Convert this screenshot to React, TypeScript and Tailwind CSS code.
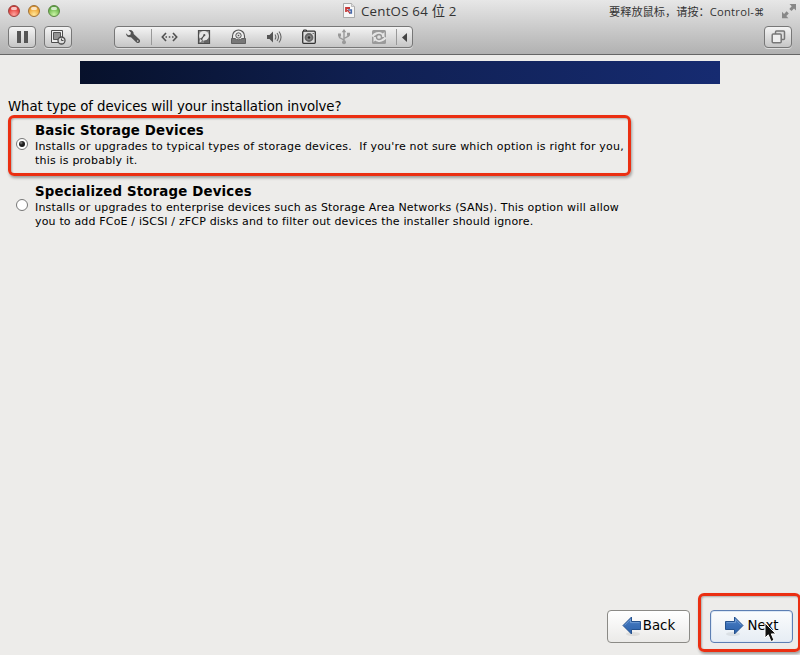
import React from "react";

const toolButton =
  "flex h-[22px] w-7 items-center justify-center rounded-[4px] border border-[#777] bg-linear-to-b from-[#f4f4f4] to-[#c6c6c6] shadow-[0_1px_0_#ddd]";

function TrafficLight({ className }: { className: string }) {
  return (
    <span className={`flex size-3 justify-center rounded-full border ${className}`}>
      <span className="mt-px h-[3px] w-1.5 rounded-full bg-white/70" />
    </span>
  );
}

function DocumentIcon() {
  return (
    <svg width="12" height="15" viewBox="0 0 12 15">
      <path d="M.5.5h8l3 3v11H.5z" fill="#f7f7f7" stroke="#999" strokeWidth=".8" />
      <path d="M8.5.5v3h3" fill="#ddd" stroke="#aaa" strokeWidth=".7" />
      <path d="M3 9V5h4" fill="none" stroke="#c63a38" strokeWidth="1.8" />
      <path d="M5 7h3.3v3H6" fill="none" stroke="#466aab" strokeWidth="1.6" />
      <path d="M4 7l3 3" stroke="#c63a38" strokeWidth="1.2" />
    </svg>
  );
}

function FullscreenIcon() {
  return (
    <svg width="15" height="15" viewBox="0 0 15 15" fill="#888">
      <path d="M7.5 0H14v6.5l-2-2-2.5 2.6-2.2-2.2L9.7 2.2zM0 7.8l2.1 2.1 2.5-2.6 2.2 2.2-2.5 2.6 2.1 2.1H0z" />
    </svg>
  );
}

function SnapshotIcon() {
  return (
    <svg width="16" height="16" viewBox="0 0 16 16">
      <path d="M1.5 13.5V1.5h11v12z" fill="#eee" stroke="#4d4d4d" />
      <path d="M3.5 3.5h7v7h-7z" fill="#929292" stroke="#555" />
      <circle cx="11.5" cy="11.5" r="3.5" fill="#ddd" stroke="#4d4d4d" strokeWidth="1.3" />
      <path d="M11.5 9.5v2h2" fill="none" stroke="#4d4d4d" />
    </svg>
  );
}

function WrenchIcon() {
  return (
    <svg width="16" height="16" viewBox="0 0 16 16">
      <path d="M3.6 1.2C6.4.4 9 2.4 8.7 5.1l5.6 5.2c1.1 1.1 1 2.5.2 3.2-.8.8-2.2.8-3.1-.1L6 8.2C3.4 8.9 1 7 .9 4.3l2.3 1.9 2.2-.5.5-2.2z" fill="#555" />
      <circle cx="12.7" cy="12" r=".8" fill="#ddd" />
    </svg>
  );
}

function NetworkIcon() {
  return (
    <svg width="17" height="12" viewBox="0 0 17 12">
      <path d="M5 2L1.3 6 5 10M12 2l3.7 4L12 10" fill="none" stroke="#505050" strokeWidth="1.6" />
      <path d="M4.5 5.2H6v1.6H4.5zM7.8 5.2h1.5v1.6H7.8zM11 5.2h1.5v1.6H11z" fill="#505050" />
    </svg>
  );
}

function HardDiskIcon() {
  return (
    <svg width="14" height="16" viewBox="0 0 14 16">
      <path d="M1.5 1.5h11v13h-11z" fill="#888" stroke="#4c4c4c" strokeWidth="1.2" />
      <circle cx="7" cy="6.8" r="4.9" fill="#e5e5e5" />
      <path d="M2.5 10l2.3-1 .5 3-1.6 1.8H2z" fill="#ddd" stroke="#555" strokeWidth=".7" />
      <path d="M4 10.8l3-4.3" stroke="#444" strokeWidth="1.1" />
      <circle cx="7.3" cy="6.2" r="1.1" fill="#555" />
      <path d="M7 11.7c3-.3 4.4-2 4.8-3.5V14H7z" fill="#666" />
    </svg>
  );
}

function OpticalIcon() {
  return (
    <svg width="15" height="16" viewBox="0 0 15 16">
      <path d="M1.5 10V7A6 6 0 0 1 13.5 7v3" fill="#eee" stroke="#555" strokeWidth="1.1" />
      <circle cx="7.5" cy="6.5" r="2.7" fill="#ddd" stroke="#555" />
      <circle cx="7.5" cy="6.5" r=".8" fill="#555" />
      <path d="M.5 9.5H4c1.8 1.7 5.2 1.7 7 0h3.5v5H.5z" fill="#777" stroke="#606060" />
    </svg>
  );
}

function SpeakerIcon() {
  return (
    <svg width="16" height="14" viewBox="0 0 16 14">
      <path d="M1 5h2.5L7 1.5v11L3.5 9H1z" fill="#555" />
      <path d="M9 4.5q1.7 2.5 0 5M11 3q3 4 0 8M13 1.5q4.1 5.5 0 11" fill="none" stroke="#666" strokeWidth="1.1" />
    </svg>
  );
}

function CameraIcon() {
  return (
    <svg width="14" height="16" viewBox="0 0 14 16">
      <path d="M1.5 2V1h3v1" fill="none" stroke="#333" />
      <rect x=".7" y="2.2" width="12.6" height="12.1" rx="1" fill="#ddd" stroke="#333" strokeWidth="1.3" />
      <circle cx="7" cy="8.5" r="3.5" fill="#888" stroke="#666" strokeWidth="1.8" />
      <circle cx="7" cy="8.5" r="1.3" fill="#333" />
      <path d="M10.7 4h1v1h-1z" fill="#444" />
    </svg>
  );
}

function UsbIcon() {
  return (
    <svg width="14" height="16" viewBox="0 0 14 16">
      <path d="M7 2v11M7 11L2.5 8.5V6M7 9.5L11.5 7V5" fill="none" stroke="#999" strokeWidth="1.4" />
      <path d="M7 0l2.3 3.2H4.7zM1 4.5h3v3H1zM10 3.8h3v3h-3z" fill="#999" />
      <circle cx="7" cy="13.3" r="2" fill="#999" />
    </svg>
  );
}

function SyncIcon() {
  return (
    <svg width="16" height="16" viewBox="0 0 16 16">
      <rect x="1" y="1" width="14" height="14" rx="1.5" fill="#9a9a9a" />
      <path d="M.5 7C3 3.2 8 1.8 11.8 4.6l1.7-1.6v5H8.7l1.5-1.6C7.6 4.6 4 5.2 2.4 8.2z" fill="#e5e5e5" />
      <path d="M15.5 9c-2.5 3.8-7.5 5.2-11.3 2.4L2.5 13V8h4.8L5.8 9.6c2.6 1.8 6.2 1.2 7.8-1.8z" fill="#e5e5e5" />
      <circle cx="8" cy="8" r="2.5" fill="#e2e2e2" stroke="#959595" strokeWidth="1.3" />
    </svg>
  );
}

function WindowsIcon() {
  return (
    <svg width="15" height="14" viewBox="0 0 15 14">
      <rect x="4.5" y="1" width="9" height="8.5" rx="1" fill="#ddd" stroke="#777" strokeWidth="1.5" />
      <rect x="1.2" y="4" width="9" height="8.8" rx="1" fill="#eee" stroke="#777" strokeWidth="1.5" />
    </svg>
  );
}

function ArrowIcon({ direction }: { direction: "left" | "right" }) {
  return (
    <svg width="20" height="22" viewBox="0 0 20 22" className={direction === "left" ? "" : "-scale-x-100"}>
      <defs>
        <linearGradient id={`arrow-${direction}`} x1="0" y1="0" x2="0" y2="1">
          <stop stopColor="#4b7fc4" />
          <stop offset="1" stopColor="#2a60aa" />
        </linearGradient>
      </defs>
      <ellipse cx="11" cy="19" rx="7" ry="2" fill="#000" opacity=".07" />
      <path d="M1 10.5L9.5 2v4.5h9v8h-9V19z" fill={`url(#arrow-${direction})`} stroke="#25528f" strokeLinejoin="round" />
      <path d="M2.5 10.3l6-6v3.3h9" fill="none" stroke="#80a8dc" strokeWidth=".7" />
    </svg>
  );
}

function Radio({ checked = false }: { checked?: boolean }) {
  return (
    <span className="flex size-3 shrink-0 items-center justify-center rounded-full border border-[#777] bg-white">
      {checked && (
        <span className="size-1.5 rounded-full bg-[radial-gradient(circle_at_35%_30%,#888_0,#222_35%,#111_100%)]" />
      )}
    </span>
  );
}

type OptionProps = {
  title: string;
  titleClass: string;
  lines: [string, string];
  lineClass: string;
  checked?: boolean;
};

function Option({ title, titleClass, lines, lineClass, checked }: OptionProps) {
  return (
    <label className="flex">
      <span className="mt-4 mr-[7px] flex"><Radio checked={checked} /></span>
      <span className="block whitespace-pre">
        <span className={`block h-[18px] text-[13.33px] leading-[18px] font-bold ${titleClass}`}>{title}</span>
        <span className={`block h-[14px] text-[11px] leading-[14px] ${lineClass}`}>{lines[0]}</span>
        <span className={`block h-[14px] text-[11px] leading-[14px] ${lineClass}`}>{lines[1]}</span>
      </span>
    </label>
  );
}

export default function App() {
  return (
    <div className="relative flex h-[655px] w-[800px] flex-col overflow-hidden bg-[#edecea] font-['DejaVu_Sans','Noto_Sans_CJK_SC',sans-serif] text-black">
      <header className="h-[55px] shrink-0 border-b border-[#666] bg-linear-to-b from-[#e7e7e7] to-[#b1b1b1]">
        <div className="flex h-[26px]">
          <div className="flex w-[343px] gap-2 pt-[5px] pl-2">
            <TrafficLight className="border-[#9b4340] bg-[radial-gradient(circle_at_50%_85%,#ffa6a0,#e5443f_60%,#bb302c)]" />
            <TrafficLight className="border-[#a07135] bg-[radial-gradient(circle_at_50%_85%,#ffe79a,#efa83a_60%,#c97f25)]" />
            <TrafficLight className="border-[#5b8644] bg-[radial-gradient(circle_at_50%_85%,#cbf5a6,#72bb51_60%,#478c31)]" />
          </div>
          <div className="flex w-[266px] gap-1.5 pt-[3px] font-['Open_Sans','Noto_Sans_CJK_SC',sans-serif] text-[13.3px] leading-[17px] text-[#333]">
            <DocumentIcon />
            <span className="whitespace-nowrap tracking-[0.22px]">CentOS 64 位 2</span>
          </div>
          <div className="flex pt-1">
            <span className="w-[173px] whitespace-nowrap font-['Open_Sans','Noto_Sans_CJK_SC',sans-serif] text-[11.2px] leading-4 text-[#333]">
              要释放鼠标，请按：<span className="tracking-[0.25px]">Control-</span><span className="font-['DejaVu_Sans'] text-[10.5px]">⌘</span>
            </span>
            <FullscreenIcon />
          </div>
        </div>
        <div className="flex px-2">
          <button className={toolButton}>
            <span className="flex gap-[3px]">
              <span className="h-3 w-1 bg-[#555]" />
              <span className="h-3 w-1 bg-[#555]" />
            </span>
          </button>
          <button className={`${toolButton} ml-2`}><SnapshotIcon /></button>
          <div className="ml-[42px] flex h-[22px] w-[299px] items-center rounded-[4px] border border-[#777] bg-linear-to-b from-[#f4f4f4] to-[#c6c6c6] shadow-[0_1px_0_#ddd]">
            <span className="flex w-9 justify-center"><WrenchIcon /></span>
            <span className="h-4 w-px bg-[#999]" />
            <span className="flex w-[34px] justify-center"><NetworkIcon /></span>
            <span className="flex w-[35px] justify-center"><HardDiskIcon /></span>
            <span className="flex w-[35px] justify-center"><OpticalIcon /></span>
            <span className="flex w-[35px] justify-center"><SpeakerIcon /></span>
            <span className="flex w-[35px] justify-center"><CameraIcon /></span>
            <span className="flex w-[35px] justify-center"><UsbIcon /></span>
            <span className="flex w-[35px] justify-center"><SyncIcon /></span>
            <span className="h-4 w-px bg-[#999]" />
            <svg className="ml-[5px]" width="6" height="9" viewBox="0 0 6 9"><path d="M0 4.5L5 0v9z" fill="#444" /></svg>
          </div>
          <button className={`${toolButton} ml-auto`}><WindowsIcon /></button>
        </div>
      </header>
      <main className="flex grow flex-col">
        <div className="mx-20 mt-1.5 h-[23px] bg-linear-to-r from-[#07112b] via-[#102052] via-45% to-[#162b71]" />
        <h1 className="mt-3.5 ml-2 h-[17px] text-[13.33px] leading-[18px] tracking-[-0.1px] whitespace-nowrap">What type of devices will your installation involve?</h1>
        <section className="ml-2 h-[61px] w-[623px] rounded-[6px] border-[3px] border-[#eb2f12] pt-1 pl-[5px] shadow-[1px_2px_3px_#0005,inset_1px_1px_2px_#0004]">
          <Option
            checked
            title="Basic Storage Devices"
            titleClass="tracking-[0.12px]"
            lineClass="tracking-[0.198px]"
            lines={["Installs or upgrades to typical types of storage devices.  If you're not sure which option is right for you,", "this is probably it."]}
          />
        </section>
        <section className="mt-[7px] ml-4">
          <Option
            title="Specialized Storage Devices"
            titleClass="tracking-[0.18px]"
            lineClass="tracking-[0.17px]"
            lines={["Installs or upgrades to enterprise devices such as Storage Area Networks (SANs). This option will allow", "you to add FCoE / iSCSI / zFCP disks and to filter out devices the installer should ignore."]}
          />
        </section>
        <footer className="mt-auto mr-[7px] mb-3 flex justify-end gap-5 text-[13.33px] leading-[18px]">
          <button className="flex h-[33px] w-[83px] items-center justify-center gap-px rounded-[4px] border border-[#8b8a86] bg-linear-to-b from-white to-[#ebeae8] pb-0.5">
            <ArrowIcon direction="left" /><span>Back</span>
          </button>
          <button className="flex h-[33px] w-[83px] items-center justify-center gap-[3px] rounded-[4px] border border-[#5d7fb3] bg-linear-to-b from-[#fbfcfd] to-[#e6edf4] pb-0.5 shadow-[inset_0_0_0_1px_#dce8f5]">
            <ArrowIcon direction="right" /><span>Next</span>
          </button>
        </footer>
      </main>
      <div className="absolute top-[593px] left-[698px] h-[59px] w-[103px] rounded-[6px] border-[3px] border-[#eb2f12] shadow-[1px_2px_3px_#0005,inset_1px_1px_2px_#0004]" />
      <svg className="absolute top-[622px] left-[764px]" width="14" height="21" viewBox="0 0 14 21">
        <path d="M1 1v15l3.3-3.2L7 19.5l3-1.2-2.7-6.4H12z" fill="#111" stroke="#fff" />
      </svg>
    </div>
  );
}
